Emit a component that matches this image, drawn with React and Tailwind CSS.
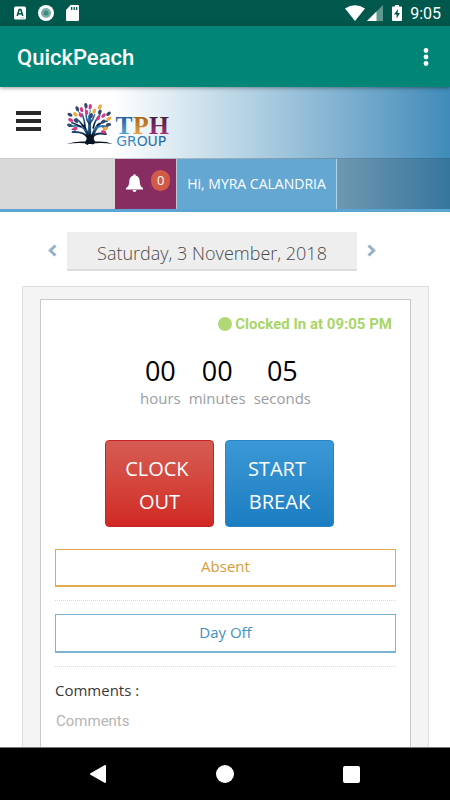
import React from "react";

// x, y, colour, rotation
const leaves = [
  [66, 17, "#35476b", -8],
  [79, 20, "#d8388c", 8],
  [108, 20, "#f3a63b", 35],
  [40, 26, "#35476b", -25],
  [53, 29, "#d8388c", -20],
  [91, 33, "#f3a63b", 15],
  [68, 37, "#d8388c", -5],
  [108, 36, "#35476b", 25],
  [18, 44, "#35476b", -65],
  [34, 43, "#f3a63b", -45],
  [50, 45, "#d8388c", -30],
  [82, 47, "#35476b", 10],
  [119, 47, "#d8388c", 45],
  [134, 41, "#35476b", 50],
  [135, 56, "#f3a63b", 60],
  [103, 54, "#d8388c", 35],
  [20, 60, "#d8388c", -65],
  [36, 62, "#35476b", -50],
  [118, 65, "#35476b", 55],
  [17, 76, "#35476b", -80],
  [33, 86, "#d8388c", 75],
  [134, 74, "#35476b", 80],
  [124, 86, "#f3a63b", 75],
  [119, 96, "#d8388c", -75],
];

const Logo = () => (
  <svg viewBox="0 0 322 150" className="w-[107px] h-[50px]" role="img" aria-label="TPH Group">
    <defs>
      <linearGradient id="trunk" x1="0" y1="0" x2="0" y2="1">
        <stop offset="0" stopColor="#3580bd" />
        <stop offset="0.5" stopColor="#1c4c7c" />
        <stop offset="0.85" stopColor="#0b1424" />
      </linearGradient>
      <linearGradient id="letterT" x1="0" y1="0" x2="0" y2="1">
        <stop offset="0.2" stopColor="#225f9d" />
        <stop offset="0.9" stopColor="#62b1e0" />
      </linearGradient>
      <linearGradient id="letterP" x1="0" y1="0" x2="0" y2="1">
        <stop offset="0.2" stopColor="#a96412" />
        <stop offset="0.9" stopColor="#efad4c" />
      </linearGradient>
      <linearGradient id="letterH" x1="0" y1="0" x2="0" y2="1">
        <stop offset="0.2" stopColor="#45203f" />
        <stop offset="0.9" stopColor="#b33182" />
      </linearGradient>
      <linearGradient id="group" x1="0" y1="0" x2="1" y2="0">
        <stop offset="0" stopColor="#3f97cf" />
        <stop offset="1" stopColor="#2a5f97" />
      </linearGradient>
    </defs>
    <g fill="none" stroke="url(#trunk)" strokeLinecap="round">
      <path strokeWidth="9" d="M73 128Q76 98 56 78M79 128Q76 92 77 48M84 128Q84 96 106 72" />
      <path strokeWidth="6" d="M72 114Q62 94 26 96M86 112Q94 96 126 102M66 90Q52 74 24 78M92 90Q104 74 130 80" />
      <path strokeWidth="5" d="M60 80Q48 64 37 56M64 86Q62 60 55 42M77 72Q66 58 67 44M78 70Q90 56 92 44M88 84Q92 62 107 46M100 76Q112 66 130 63M50 80Q38 72 24 68" />
      <path strokeWidth="3" d="M77 60Q76 44 79 30M67 46Q66 34 65 26M56 46Q48 40 43 34M106 52Q112 40 108 30M34 92Q28 86 24 88M116 82Q122 88 128 88" />
    </g>
    {leaves.map(([x, y, fill, turn]) => (
      <ellipse key={`${x}-${y}`} cx={x} cy={y} rx="5" ry="8" fill={fill} transform={`rotate(${turn} ${x} ${y})`} />
    ))}
    <path d="M6 133Q36 122 64 125Q70 118 71 104L86 104Q87 118 94 125Q126 123 146 132Q120 128 94 130L86 134L78 130L70 135L62 130Q34 128 6 133Z" fill="#0b1424" />
    <g fontFamily="Liberation Serif, serif" fontWeight="bold" fontSize="77">
      <text x="155" y="102" fill="url(#letterT)">T</text>
      <text x="208" y="102" fill="url(#letterP)">P</text>
      <text x="256" y="102" fill="url(#letterH)">H</text>
    </g>
    <text x="157" y="138" fill="url(#group)" fontFamily="DejaVu Sans, sans-serif" fontSize="42">
      GROUP
    </text>
  </svg>
);

const StatusBar = () => (
  <div className="h-[26px] shrink-0 bg-[#00574b] pl-[14px] pr-[9px] flex items-center justify-between text-white">
    <div className="flex items-center gap-3">
      <svg viewBox="0 0 12 14" className="w-3 h-3.5" aria-hidden="true">
        <rect width="12" height="13" y="0.5" rx="1.5" fill="#fff" />
        <path d="M3.2 10L5.2 3.5H6.8L8.8 10M4 7.8H8" fill="none" stroke="#00574b" strokeWidth="1.6" />
        <path d="M6 12H7.5M8.3 12H10" stroke="#8fb8b1" />
      </svg>
      <svg viewBox="0 0 16 16" className="size-4" aria-hidden="true">
        <circle cx="8" cy="8" r="8" fill="#fff" />
        <circle cx="8" cy="8" r="5" fill="#7fb0a8" />
        <circle cx="8" cy="8" r="2.6" fill="#478a80" />
      </svg>
      <svg viewBox="0 0 13 16" className="w-[13px] h-4" aria-hidden="true">
        <path d="M4.5 0H12Q13 0 13 1V15Q13 16 12 16H1Q0 16 0 15V5Z" fill="#fff" />
        <path d="M5.7 2V5M8.2 2V5M10.7 2V5" stroke="#00574b" strokeWidth="1.3" />
      </svg>
    </div>
    <div className="flex items-center">
      <svg viewBox="0 0 20 16" className="w-5 h-4" aria-hidden="true">
        <path d="M0 3.5Q10 -3 20 3.5L10 16Z" fill="#fff" />
      </svg>
      <svg viewBox="0 0 16 16" className="size-4 ml-0.5" aria-hidden="true">
        <path d="M16 0V16H0Z" fill="#5f988f" />
        <path d="M9.500 6.500V16H0Z" fill="#fff" />
      </svg>
      <svg viewBox="0 0 10 16" className="w-2.5 h-4 ml-[9px]" aria-hidden="true">
        <path d="M3 0H7V1.500H9Q10 1.500 10 2.500V15Q10 16 9 16H1Q0 16 0 15V2.500Q0 1.500 1 1.500H3Z" fill="#fff" />
        <path d="M6 4L2 9.500H4.600V13.500L8 8H5.600Z" fill="#00574b" />
      </svg>
      <span className="ml-2 pt-0.5 font-['Roboto',sans-serif] text-base">9:05</span>
    </div>
  </div>
);

const AppBar = () => (
  <div className="relative z-10 h-[61px] shrink-0 bg-[#008577] pl-[17px] pr-3 flex items-center justify-between text-white shadow-[0_1px_4px_rgba(0,0,0,0.4)]">
    <h1 className="pt-0.5 font-['Roboto',sans-serif] text-[22px] font-medium">QuickPeach</h1>
    <button className="w-6 h-8 flex items-center justify-center" aria-label="More options">
      <svg viewBox="0 0 6 20" className="w-1.5 h-5" fill="currentColor" aria-hidden="true">
        <circle cx="3" cy="3.500" r="2.400" />
        <circle cx="3" cy="10" r="2.400" />
        <circle cx="3" cy="16.500" r="2.400" />
      </svg>
    </button>
  </div>
);

const Header = () => (
  <header className="shrink-0 border-b-3 border-[#5aa5d3] bg-linear-to-r from-white from-25% via-[#b9d5e5] via-53% to-[#3f8bb9]">
    <div className="h-[72px] pl-4 flex items-center border-b border-black/20">
      <button className="pb-1" aria-label="Menu">
        <svg viewBox="0 0 25 20" className="w-[25px] h-5" aria-hidden="true">
          <path d="M0 2H25M0 10H25M0 18H25" stroke="#292929" strokeWidth="4" />
        </svg>
      </button>
      <a href="#home" className="ml-[23px] mt-1">
        <Logo />
      </a>
    </div>
    <div className="h-[50px] bg-black/15 pl-0.5 flex justify-center">
      <button className="w-[61px] bg-[#872d62] pl-[11px] pr-1.5 flex items-start justify-between text-white" aria-label="Notifications, 0 new">
        <svg viewBox="0 0 17 18" className="w-[17px] h-[18px] mt-[15px]" fill="currentColor" aria-hidden="true">
          <path d="M8.500 0Q9.700 0 9.700 1.500Q13.500 2.500 13.700 7Q13.800 12.500 17 14V15.500H0V14Q3.200 12.500 3.300 7Q3.500 2.500 7.300 1.500Q7.300 0 8.500 0ZM6.500 16H10.500Q10.300 18 8.500 18Q6.700 18 6.500 16Z" />
        </svg>
        <span className="w-[19px] h-[21px] mt-[11px] rounded-full bg-[#d15b47] text-[13px] leading-5">0</span>
      </button>
      <a href="#profile" className="ml-px bg-[#64a7d3] border-r border-white/50 px-[10px] flex items-center text-sm text-white">
        Hi, MYRA CALANDRIA
      </a>
    </div>
  </header>
);

const counters = [
  { value: "00", label: "hours" },
  { value: "00", label: "minutes" },
  { value: "05", label: "seconds" },
];

const ClockCard = () => (
  <section className="ml-[22px] mr-[21px] mt-[15px] border border-[#dedede] bg-[#f4f4f4] px-[17px] pt-3">
    <div className="h-[560px] border border-[#c8c8c8] bg-white px-[14px] pt-3">
      <p className="pr-1 flex items-center justify-end gap-[3px] font-['Roboto',sans-serif] text-[15px] leading-6 font-bold text-[#aad568]">
        <span className="size-[14px] rounded-full bg-[#b0d877]" />
        Clocked In at 09:05 PM
      </p>
      <div className="mt-4 flex justify-center gap-2">
        {counters.map((c) => (
          <div key={c.label} className="text-center">
            <div className="text-[27px] leading-[38px] text-black">{c.value}</div>
            <div className="text-[15px] leading-4 text-[#9a9da3]">{c.label}</div>
          </div>
        ))}
      </div>
      <div className="mt-[34px] pr-3 flex justify-center gap-[11px] text-xl leading-[33px] text-white">
        <button className="w-[109px] h-[87px] pt-0.5 rounded border border-[#c62422] bg-linear-to-b from-[#d55b52] to-[#d12723]">
          CLOCK&nbsp;
          <br />
          OUT
        </button>
        <button className="w-[109px] h-[87px] pt-0.5 rounded border border-[#2a83c2] bg-linear-to-b from-[#3b98d6] to-[#1b7dc1]">
          START&nbsp;
          <br />
          BREAK
        </button>
      </div>
      <button className="mt-[22px] w-full h-[38px] pb-0.5 border border-b-2 border-[#e3a951] text-[15px] text-[#d99b3a]">Absent</button>
      <hr className="mt-[13px] border-t border-dotted border-[#d8d8d8]" />
      <button className="mt-[13px] w-full h-[39px] pb-0.5 border border-b-2 border-[#7db4d6] text-[15px] text-[#4490bd]">Day Off</button>
      <hr className="mt-[13px] border-t border-dotted border-[#d8d8d8]" />
      <label htmlFor="comments" className="mt-[11px] block text-[15px] leading-6 text-[#393939]">
        Comments :
      </label>
      <textarea
        id="comments"
        placeholder="Comments"
        className="mt-[7px] w-full h-20 resize-none px-px font-['Roboto',sans-serif] text-[15px] leading-6 outline-none placeholder:text-[#b5b5b5]"
      />
    </div>
  </section>
);

const NavBar = () => (
  <nav className="h-[53px] shrink-0 bg-black border-t border-[#777] pr-0.5 flex items-center justify-center gap-[109px]">
    <button aria-label="Back">
      <svg viewBox="0 0 18 18" className="size-[18px]" aria-hidden="true">
        <path d="M16 1V17L2 9Z" fill="#fff" stroke="#fff" strokeWidth="2" strokeLinejoin="round" />
      </svg>
    </button>
    <button aria-label="Home">
      <span className="block size-[18px] rounded-full bg-white" />
    </button>
    <button aria-label="Recent apps">
      <span className="block size-[17px] rounded-xs bg-white" />
    </button>
  </nav>
);

const App = () => (
  <div className="h-screen flex flex-col bg-white font-['Open_Sans',sans-serif] overflow-hidden">
    <StatusBar />
    <AppBar />
    <Header />
    <main className="flex-1 min-h-0 overflow-hidden">
      <div className="mt-5 pr-[26px] flex justify-center items-center gap-[10px] text-[#98b0c6]">
        <button className="pb-0.5" aria-label="Previous day">
          <svg viewBox="0 0 9 13" className="w-[9px] h-[13px]" aria-hidden="true">
            <path d="M7.500 1.500L2.300 6.500L7.500 11.500" fill="none" stroke="currentColor" strokeWidth="3" />
          </svg>
        </button>
        <div className="w-[290px] h-[39px] bg-[#eeeeee] border-b-2 border-[#dddddd] text-lg leading-[42px] font-light text-center text-[#4a4a4a]">
          Saturday, 3 November, 2018
        </div>
        <button className="pb-0.5" aria-label="Next day">
          <svg viewBox="0 0 9 13" className="w-[9px] h-[13px]" aria-hidden="true">
            <path d="M1.500 1.500L6.700 6.500L1.500 11.500" fill="none" stroke="currentColor" strokeWidth="3" />
          </svg>
        </button>
      </div>
      <ClockCard />
    </main>
    <NavBar />
  </div>
);

export default App;
